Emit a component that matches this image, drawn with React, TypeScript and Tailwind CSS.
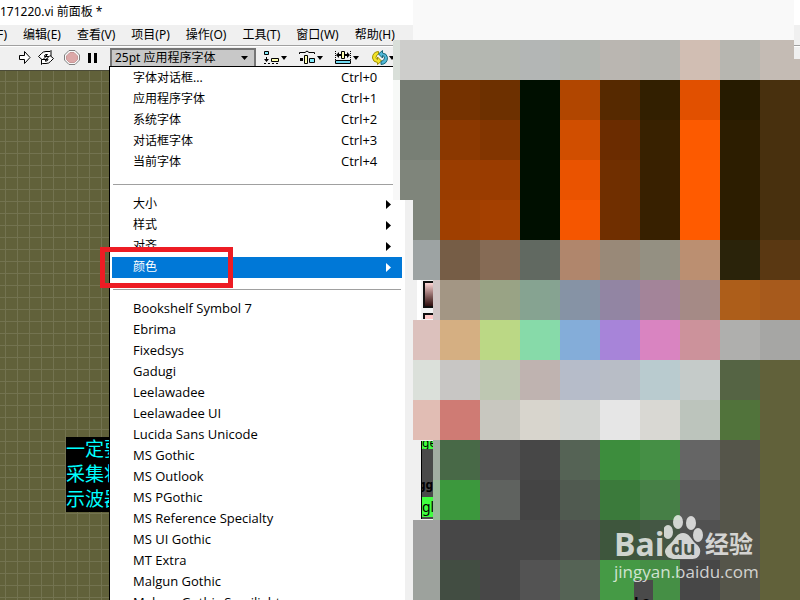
const MENUS = ["F)", "编辑(E)", "查看(V)", "项目(P)", "操作(O)", "工具(T)", "窗口(W)", "帮助(H)"];

const STYLES = [
  { label: "字体对话框...", keys: "Ctrl+0" },
  { label: "应用程序字体", keys: "Ctrl+1" },
  { label: "系统字体", keys: "Ctrl+2" },
  { label: "对话框字体", keys: "Ctrl+3" },
  { label: "当前字体", keys: "Ctrl+4" },
];

const SUBMENUS = ["大小", "样式", "对齐", "颜色"];

const FONTS = [
  "Bookshelf Symbol 7",
  "Ebrima",
  "Fixedsys",
  "Gadugi",
  "Leelawadee",
  "Leelawadee UI",
  "Lucida Sans Unicode",
  "MS Gothic",
  "MS Outlook",
  "MS PGothic",
  "MS Reference Specialty",
  "MS UI Gothic",
  "MT Extra",
  "Malgun Gothic",
  "Malgun Gothic Semilight",
];

// edge = the narrower tiles on the left side of a row
const MOSAIC = [
  {
    edge: ["w-[7px] bg-[#d9dfd9]", "w-10 bg-[#cdcdcb]"],
    cells: ["bg-[#b4b7b1]", "bg-[#b4b7b1]", "bg-[#b3b6b5]", "bg-[#b3b6b1]", "bg-[#bab6b1]", "bg-[#b7b6b1]", "bg-[#d1beb3]", "bg-[#b7b6b0]", "bg-[#c4bbb4]"],
  },
  {
    edge: ["w-[7px] bg-[#f7f9f7]", "w-10 bg-[#757b72]"],
    cells: ["bg-[#753200]", "bg-[#6d3000]", "bg-[#000f00]", "bg-[#b14600]", "bg-[#562900]", "bg-[#321f00]", "bg-[#e15000]", "bg-[#261b00]", "bg-[#48300e]"],
  },
  {
    edge: ["w-[7px] bg-[#f6f6f6]", "w-10 bg-[#787f75]"],
    cells: ["bg-[#8b3800]", "bg-[#823500]", "bg-[#000f00]", "bg-[#d04e00]", "bg-[#6b2c00]", "bg-[#382100]", "bg-[#fc5a00]", "bg-[#2c1d00]", "bg-[#48300e]"],
  },
  {
    edge: ["w-[7px] bg-[#f8f8f8]", "w-10 bg-[#7f857b]"],
    cells: ["bg-[#9a3d00]", "bg-[#9a3c00]", "bg-[#000f00]", "bg-[#ea5300]", "bg-[#702f00]", "bg-[#382000]", "bg-[#ff5b00]", "bg-[#2c1d00]", "bg-[#48300e]"],
  },
  {
    edge: ["w-[27px] bg-[#7f857b]"],
    cells: ["bg-[#9f3f00]", "bg-[#a44000]", "bg-[#000f00]", "bg-[#f55600]", "bg-[#702f00]", "bg-[#372000]", "bg-[#ff5b00]", "bg-[#2c1d00]", "bg-[#48300e]"],
  },
  {
    edge: ["w-[27px] bg-[#9da3a3]"],
    cells: ["bg-[#765d46]", "bg-[#866b55]", "bg-[#616961]", "bg-[#b0866c]", "bg-[#998978]", "bg-[#949082]", "bg-[#bb8f71]", "bg-[#2a230a]", "bg-[#5a3812]"],
  },
  {
    edge: ["w-[7px] bg-[#d0c5c5]"],
    cells: ["bg-[#a39684]", "bg-[#99a385]", "bg-[#86a391]", "bg-[#8693a5]", "bg-[#9285a3]", "bg-[#a38499]", "bg-[#a58a86]", "bg-[#ad5e1a]", "bg-[#a75a1c]"],
  },
  {
    edge: ["w-[27px] bg-[#dcc1bd]"],
    cells: ["bg-[#d5af82]", "bg-[#bbd885]", "bg-[#87daa9]", "bg-[#84add9]", "bg-[#a784d9]", "bg-[#d984c1]", "bg-[#cc929b]", "bg-[#afafad]", "bg-[#a6a6a4]"],
  },
  {
    edge: ["w-[27px] bg-[#dbe0da]"],
    cells: ["bg-[#c8c6c4]", "bg-[#bec7b2]", "bg-[#bfb3b0]", "bg-[#b6bcc9]", "bg-[#b8bdc6]", "bg-[#b9cbcf]", "bg-[#c5cbc9]", "bg-[#556444]", "bg-[#61613a]"],
  },
  {
    edge: ["w-[27px] bg-[#e1bdb4]"],
    cells: ["bg-[#cf7b74]", "bg-[#c8c7bf]", "bg-[#d8d5cd]", "bg-[#d3d5d2]", "bg-[#e6e6e6]", "bg-[#d9d8d3]", "bg-[#bcc4bc]", "bg-[#51733b]", "bg-[#61613a]"],
  },
  {
    edge: ["w-[7px] bg-[#a3aea3]"],
    cells: ["bg-[#486947]", "bg-[#545454]", "bg-[#474747]", "bg-[#556355]", "bg-[#3d8d3d]", "bg-[#458f45]", "bg-[#656565]", "bg-[#55554a]", "bg-[#61613a]"],
  },
  {
    edge: ["w-[7px] bg-[#9abb9a]"],
    cells: ["bg-[#3c983d]", "bg-[#5f625f]", "bg-[#444444]", "bg-[#505a50]", "bg-[#3b7a3b]", "bg-[#467f46]", "bg-[#5b5b5b]", "bg-[#55554a]", "bg-[#61613a]"],
  },
  {
    edge: ["w-[27px] bg-[#a0a0a0]"],
    cells: ["bg-[#474747]", "bg-[#474747]", "bg-[#474747]", "bg-[#4d514d]", "bg-[#3e563d]", "bg-[#445744]", "bg-[#515151]", "bg-[#55554a]", "bg-[#61613a]"],
  },
  {
    edge: ["w-[27px] bg-[#9da29d]"],
    cells: ["bg-[#424d42]", "bg-[#474747]", "bg-[#535353]", "bg-[#556355]", "bg-[#459a45]", "bg-[#458f45]", "bg-[#474747]", "bg-[#55554a]", "bg-[#61613a]"],
  },
];

function RunIcon() {
  return (
    <svg width="14" height="16" viewBox="0 0 14 16">
      <path d="M1.500 6.500h5v-4L12 8.500l-5.500 6v-4h-5z" fill="#fff" stroke="#000" />
    </svg>
  );
}

function RunLoopIcon() {
  return (
    <svg width="18" height="16" viewBox="0 0 18 16" fill="#fff" stroke="#000">
      <path d="M1.500 7.500l3-3Q6 2.500 9 2.500h4l1-1v6H8.500l2-2H9q-1.500 0-1.500 2H9l-3.500 3.500-4-3.500z" />
      <path d="M16.500 9.500l-3 3q-1.500 2-4.500 2H5.500l-1 1v-5h5.500l-2 1.500h1.500q1.500 0 1.500-2H9.500l3.500-3.500 3.500 3z" />
    </svg>
  );
}

function AbortIcon() {
  return (
    <svg width="16" height="16" viewBox="0 0 16 16">
      <path d="M5 1.500h6L15.500 6v5L11 15.500H5L.5 11V6z" fill="#f8f8f8" stroke="#808080" />
      <path d="M6 3.500h4L13.500 7v3.500l-3 3h-5l-3-3V7z" fill="#dca8a8" stroke="#c89898" />
    </svg>
  );
}

function PauseIcon() {
  return (
    <svg width="11" height="16" viewBox="0 0 11 16">
      <path d="M1 4h3v10H1zM7 4h3v10H7z" />
    </svg>
  );
}

function AlignIcon() {
  return (
    <svg width="24" height="16" viewBox="0 0 24 16">
      <path d="M1.500 2.500h4v3h-4z" fill="#80e8f8" stroke="#000" />
      <path d="M3 8h1v2h2l-2.500 3L1 10h2z" />
      <path d="M1 14h2v1H1zM5 14h2v1H5zM9 14h2v1H9zM13 14h2v1h-2z" />
      <path d="M8.500 9.500h7v3h-7z" fill="#ffffb0" stroke="#000" />
      <path d="M18 7h6l-3 4z" />
    </svg>
  );
}

function DistributeIcon() {
  return (
    <svg width="24" height="16" viewBox="0 0 24 16">
      <path d="M.5 5V3.500h5.500L8 2l2 1.500h5.500V5" fill="none" stroke="#000" />
      <path d="M1 9h3v3H1z" />
      <path d="M5.500 6.500h3v8h-3z" fill="#ffffb0" stroke="#000" />
      <path d="M10.500 9.500h5v4h-5z" fill="#80e8f8" stroke="#000" />
      <path d="M18 7h6l-3 4z" />
    </svg>
  );
}

function ResizeIcon() {
  return (
    <svg width="24" height="16" viewBox="0 0 24 16">
      <path d="M.5 2v9M15.500 2v9" stroke="#000" strokeDasharray="1 1" />
      <path d="M1 6l3-3v2h2v2H4v2zM15 6l-3-3v2h-2v2h2v2z" />
      <path d="M6.500 2.500h3v7h-3z" fill="#ffffb0" stroke="#000" />
      <path d="M.5 11.500h15v3H.5z" fill="#70d8f0" stroke="#000" />
      <path d="M18 7h6l-3 4z" />
    </svg>
  );
}

function ReorderIcon() {
  return (
    <svg width="24" height="16" viewBox="0 0 24 16">
      <path d="M7.500 2.500Q1.500 3 1.500 9q.5 4 5 4.500v2l4-3.500-4-4v2.500Q5 10 5 8.500 5 6 7.500 5z" fill="#f4e428" stroke="#a09000" />
      <path d="M10 15.500q6.500-.5 6.500-7Q16 4.500 11.500 4V1.500L7.500 5l4 4V6.500q2 .5 2 2.500 0 2.500-3.500 3.500z" fill="#50b8d8" stroke="#186878" />
      <path d="M18 7h6l-3 4z" />
    </svg>
  );
}

function FontMenu() {
  return (
    <div role="menu" className="absolute -left-px top-full z-10 w-[296px] border-l border-t border-black bg-white pl-0.5 pt-px text-black">
      {STYLES.map((item) => (
        <button key={item.label} role="menuitem" className="flex h-[21px] w-full pl-[21px] text-left leading-[19px]">
          <span className="w-52">{item.label}</span>
          <span className="font-['Open_Sans',sans-serif] text-[13px]">{item.keys}</span>
        </button>
      ))}
      <div role="separator" className="h-[21px] pl-px pr-1 pt-[11px]">
        <div className="h-px w-full bg-[#a0a0a0]" />
      </div>
      {SUBMENUS.map((label) => (
        <button
          key={label}
          role="menuitem"
          aria-haspopup="menu"
          className={
            label === "颜色"
              ? "flex h-[21px] w-[290px] items-center justify-between bg-[#0078d7] pl-[21px] pr-[11px] text-white"
              : "flex h-[21px] w-[290px] items-center justify-between pl-[21px] pr-[11px]"
          }
        >
          <span className="h-full leading-[19px]">{label}</span>
          <svg width="5" height="9" viewBox="0 0 5 9" fill="currentColor">
            <path d="M0 0l5 4.500L0 9z" />
          </svg>
        </button>
      ))}
      <div role="separator" className="h-[21px] pl-px pr-1 pt-[11px]">
        <div className="h-px w-full bg-[#a0a0a0]" />
      </div>
      {FONTS.map((font) => (
        <button key={font} role="menuitem" className="flex h-[21px] w-full pl-[21px] text-left font-['Open_Sans',sans-serif] text-[13px] leading-[19px]">
          {font}
        </button>
      ))}
    </div>
  );
}

function Toolbar() {
  return (
    <div className="flex h-6 items-start border-t border-white bg-[#f0f0f0] pl-[18px] pt-px">
      <div className="flex h-[18px] items-center">
        <button aria-label="运行" className="mr-[5px]"><RunIcon /></button>
        <button aria-label="连续运行" className="mr-[9px]"><RunLoopIcon /></button>
        <button aria-label="中止" className="mr-[7px]"><AbortIcon /></button>
        <button aria-label="暂停" className="mr-3"><PauseIcon /></button>
      </div>
      <div className="relative mr-[7px]">
        <button
          aria-haspopup="menu"
          aria-expanded="true"
          className="flex h-[18px] w-[146px] items-center justify-between border-2 border-b-0 border-[#757575] bg-[#c8c8c8] pl-[3px] pr-1.5"
        >
          25pt 应用程序字体
          <svg width="7" height="4" viewBox="0 0 7 4">
            <path d="M0 0h7L3.500 4z" />
          </svg>
        </button>
        <FontMenu />
      </div>
      <div className="flex h-[18px] items-center gap-3">
        <button aria-label="对齐对象"><AlignIcon /></button>
        <button aria-label="分布对象"><DistributeIcon /></button>
        <button aria-label="调整对象大小"><ResizeIcon /></button>
        <button aria-label="重新排序"><ReorderIcon /></button>
      </div>
    </div>
  );
}

function ColorPicker() {
  return (
    <div className="absolute bottom-0 left-[405px] top-[200px] z-10 w-10 bg-[#f0f0f0] pl-3 pt-20">
      <div className="h-10 bg-white pl-1">
        <div className="h-full bg-[#f4f4f4] pl-0.5 pt-px">
          <div className="h-[27px] border-2 border-[#101010] bg-linear-to-b from-[#ffd8d8] to-[#301010]" />
          <div className="mt-[5px] h-1.5 border-l-2 border-t-2 border-[#101010] bg-[#ffc8c8]" />
        </div>
      </div>
      <div className="ml-1 mt-[121px] h-[78px] overflow-hidden border-l border-black bg-[#4a4a4a] text-black">
        <div className="h-2 overflow-hidden bg-[#40ff40] leading-[4px]">ge</div>
        <div className="-ml-1 flex h-12 items-end overflow-hidden text-xs font-bold leading-6">gge</div>
        <div className="h-5 overflow-hidden bg-[#40ff40] text-sm leading-5">gl</div>
      </div>
    </div>
  );
}

function Mosaic() {
  return (
    <div className="pointer-events-none absolute left-[393px] right-0 top-0 z-20">
      <div className="ml-5 mr-1.5 h-10 bg-[#f9f9f9]" />
      {MOSAIC.map((row, i) => (
        <div key={i} className="flex h-10 justify-end">
          <div className="flex w-[47px] shrink-0 justify-end">
            {row.edge.map((tile) => (
              <div key={tile} className={tile} />
            ))}
          </div>
          {row.cells.map((tile, j) => (
            <div key={j} className={`flex-1 ${tile}`} />
          ))}
        </div>
      ))}
      <div className="absolute right-0 top-10 h-[19px] w-1.5 border-t-[5px] border-[#f0f0f0] bg-[#f0f0f0]">
        <div className="h-0.5 border-b border-white bg-[#a0a0a0]" />
      </div>
    </div>
  );
}

function Watermark() {
  return (
    <div className="absolute left-[614px] top-[514px] z-30 text-white/75">
      <div className="flex h-[46px] items-end">
        <span className="w-[50px] font-['Open_Sans',sans-serif] text-[32px] font-bold leading-8">Bai</span>
        <svg width="40" height="46" viewBox="0 0 40 46" fill="currentColor" className="mr-px">
          <ellipse cx="4" cy="18" rx="5" ry="7" />
          <ellipse cx="14" cy="8" rx="5" ry="7" />
          <ellipse cx="27" cy="9" rx="5" ry="7" />
          <ellipse cx="34" cy="21" rx="5" ry="7" />
          <path d="M19 19c6 0 8 6 12 10 4 3 6 6 5 10-1 5-5 6-9 6H11C6 45 2 43 1 38c0-4 3-6 6-9 4-4 6-10 12-10z" />
          <text x="7" y="41" fontFamily="Open Sans" fontSize="19" fontWeight="700" fill="#465246">du</text>
        </svg>
        <span className="text-2xl font-bold leading-8">经验</span>
      </div>
      <div className="font-['Open_Sans',sans-serif] text-[17px] leading-6">jingyan.baidu.com</div>
    </div>
  );
}

export default function App() {
  return (
    <div className="relative flex h-screen flex-col overflow-hidden bg-white font-['Noto_Sans','Noto_Sans_CJK_SC',sans-serif] text-xs text-black">
      <header className="h-[25px] bg-white leading-6">171220.vi 前面板 *</header>
      <nav className="flex h-[21px] gap-4 whitespace-nowrap border-b border-[#a0a0a0] bg-[#f0f0f0]">
        {MENUS.map((menu) => (
          <button key={menu} className="leading-[18px] first:-ml-[3px]">{menu}</button>
        ))}
      </nav>
      <Toolbar />
      <main className="relative flex-1 border-t border-[#4b4b38] bg-[#61613a] bg-[linear-gradient(to_right,#737350_1px,transparent_1px),linear-gradient(to_bottom,#737350_1px,transparent_1px)] bg-size-[12px_12px] bg-position-[5px_10px]">
        <div className="absolute left-[66px] top-[366px] w-20 overflow-hidden whitespace-nowrap bg-black text-[19px] leading-[25px] text-[#00ffff]">
          一定要
          <br />
          采集将
          <br />
          示波器
        </div>
      </main>
      <ColorPicker />
      <Mosaic />
      <div className="absolute left-[100px] top-[247px] z-20 h-[41px] w-[133px] border-[5px] border-[#ed1c24]" />
      <div className="absolute left-[634px] top-[580px] z-20 h-5 w-[19px] overflow-hidden bg-[#4a4a4a] pt-3 text-sm font-bold leading-5">Lo</div>
      <Watermark />
    </div>
  );
}
